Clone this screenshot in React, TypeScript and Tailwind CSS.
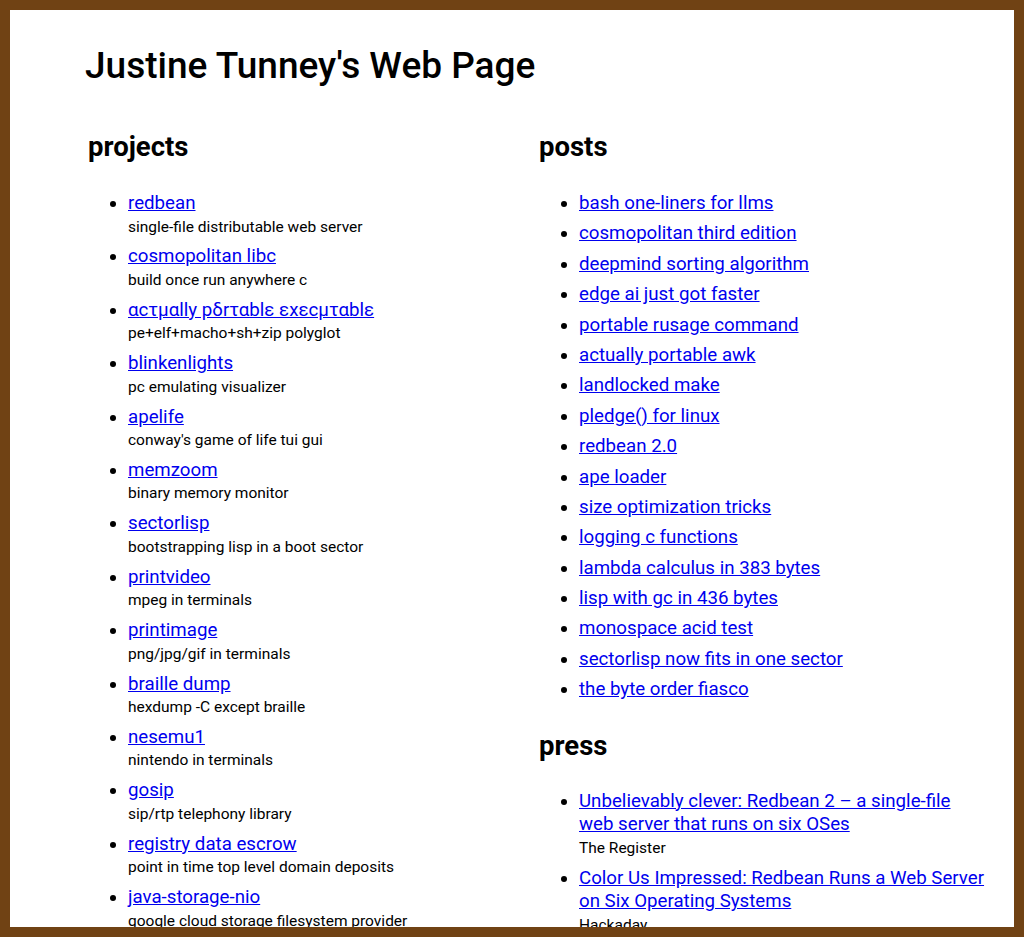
import React from "react";

const projects: [string, string][] = [
  ["redbean", "single-file distributable web server"],
  ["cosmopolitan libc", "build once run anywhere c"],
  ["αcτµαlly pδrταblε εxεcµταblε", "pe+elf+macho+sh+zip polyglot"],
  ["blinkenlights", "pc emulating visualizer"],
  ["apelife", "conway's game of life tui gui"],
  ["memzoom", "binary memory monitor"],
  ["sectorlisp", "bootstrapping lisp in a boot sector"],
  ["printvideo", "mpeg in terminals"],
  ["printimage", "png/jpg/gif in terminals"],
  ["braille dump", "hexdump -C except braille"],
  ["nesemu1", "nintendo in terminals"],
  ["gosip", "sip/rtp telephony library"],
  ["registry data escrow", "point in time top level domain deposits"],
  ["java-storage-nio", "google cloud storage filesystem provider"],
];

const posts = [
  "bash one-liners for llms",
  "cosmopolitan third edition",
  "deepmind sorting algorithm",
  "edge ai just got faster",
  "portable rusage command",
  "actually portable awk",
  "landlocked make",
  "pledge() for linux",
  "redbean 2.0",
  "ape loader",
  "size optimization tricks",
  "logging c functions",
  "lambda calculus in 383 bytes",
  "lisp with gc in 436 bytes",
  "monospace acid test",
  "sectorlisp now fits in one sector",
  "the byte order fiasco",
];

const press: [string, string][] = [
  ["Unbelievably clever: Redbean 2 – a single-file web server that runs on six OSes", "The Register"],
  ["Color Us Impressed: Redbean Runs a Web Server on Six Operating Systems", "Hackaday"],
];

const liCls = "mb-[6.9px] text-[18.7px] leading-[23.5px]";
const linkCls = "text-[#0000ee] underline";
const descCls = "block text-black text-[15.5px] leading-[23px]";

export default function App() {
  return (
    <div
      className="h-screen w-full overflow-hidden border-[10px] border-[#704214] bg-white text-black"
      style={{ fontFamily: "Roboto, 'Liberation Sans', sans-serif" }}
    >
      <div className="ml-[75px] w-[902px]">
        <h1 className="mt-[34px] text-[37px] leading-[43px] font-medium">Justine Tunney's Web Page</h1>
        <div className="mt-[43px] grid grid-cols-2">
          <div className="pl-[3px]">
            <h2 className="text-[27.5px] leading-[34px] font-bold">projects</h2>
            <ul className="mt-[28px] list-disc pl-[40px]">
              {projects.map(([t, d]) => (
                <li key={t} className={liCls}>
                  <a href="#" className={linkCls}>{t}</a>
                  <span className={descCls}>{d}</span>
                </li>
              ))}
            </ul>
          </div>
          <div className="pl-[3px]">
            <h2 className="text-[27.5px] leading-[34px] font-bold">posts</h2>
            <ul className="mt-[28px] list-disc pl-[40px]">
              {posts.map((t) => (
                <li key={t} className={liCls}>
                  <a href="#" className={linkCls}>{t}</a>
                </li>
              ))}
            </ul>
            <h2 className="mt-[27px] text-[27.5px] leading-[34px] font-bold">press</h2>
            <ul className="mt-[27px] list-disc pl-[40px]">
              {press.map(([t, d]) => (
                <li key={t} className={liCls}>
                  <a href="#" className={linkCls}>{t}</a>
                  <span className={descCls}>{d}</span>
                </li>
              ))}
            </ul>
          </div>
        </div>
      </div>
    </div>
  );
}
